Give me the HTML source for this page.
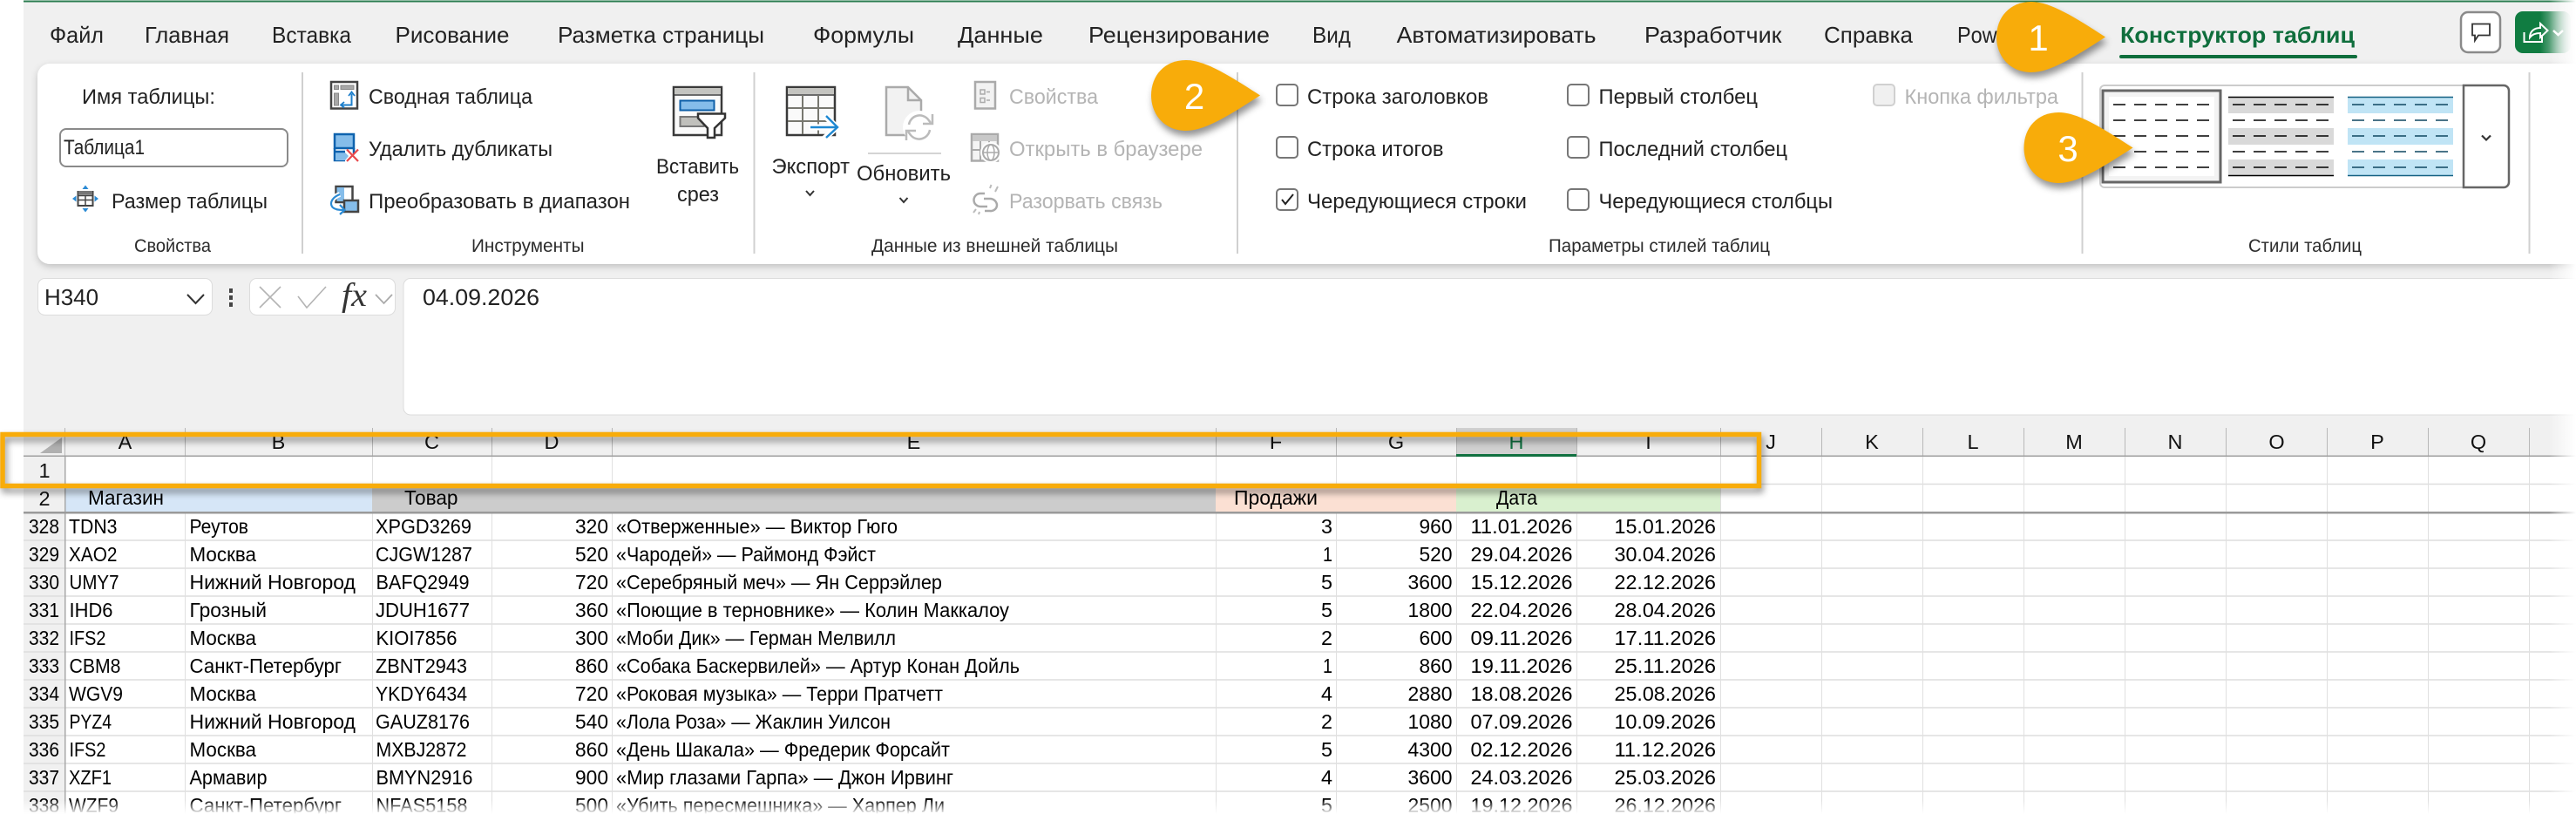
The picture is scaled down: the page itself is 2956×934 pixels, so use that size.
<!DOCTYPE html>
<html lang="ru"><head><meta charset="utf-8"><title>Excel</title>
<style>
html,body{margin:0;padding:0;background:#fff;width:2956px;height:934px;overflow:hidden}
svg{display:block}
text{font-family:"Liberation Sans","DejaVu Sans",sans-serif}
.tab{font-size:26px;fill:#222}
.rb{font-size:24px;fill:#222}
.lb{font-size:21.5px;fill:#2c2c2c}
.dis{font-size:24px;fill:#b4b4b4}
.c{font-size:23.5px;fill:#000}
.h{font-size:23.5px;fill:#111;text-anchor:middle}
.co{font-size:42px;fill:#fff;text-anchor:middle}
.call{fill:#F8AC0A;filter:drop-shadow(2px 6px 4px rgba(0,0,0,.42))}
</style></head><body>
<svg xmlns="http://www.w3.org/2000/svg" width="2956" height="934" viewBox="0 0 2956 934">
<defs>
<linearGradient id="fr" x1="0" x2="1" y1="0" y2="0"><stop offset="0" stop-color="#fff" stop-opacity="0"/><stop offset="1" stop-color="#fff"/></linearGradient>
<linearGradient id="fb" x1="0" x2="0" y1="0" y2="1"><stop offset="0" stop-color="#fff" stop-opacity="0"/><stop offset="1" stop-color="#fff"/></linearGradient>
<linearGradient id="sh" x1="0" x2="1" y1="0" y2="0"><stop offset="0" stop-color="#107C41"/><stop offset=".45" stop-color="#107C41"/><stop offset="1" stop-color="#107C41" stop-opacity=".08"/></linearGradient>
<filter id="ps" x="-5%" y="-10%" width="110%" height="125%"><feDropShadow dx="0" dy="3" stdDeviation="4" flood-color="#000" flood-opacity=".2"/></filter>
</defs>
<rect width="2956" height="934" fill="#fff"/>
<rect x="27" y="1" width="2929" height="933" fill="#f0f0f0"/>
<rect x="27" y="0.5" width="2929" height="2" fill="#2a7d4f"/>

<!-- tabs -->
<g class="tab">
<text class="tab" x="57" y="49" textLength="62" lengthAdjust="spacingAndGlyphs">Файл</text>
<text class="tab" x="166" y="49" textLength="97" lengthAdjust="spacingAndGlyphs">Главная</text>
<text class="tab" x="312" y="49" textLength="91" lengthAdjust="spacingAndGlyphs">Вставка</text>
<text class="tab" x="453.5" y="49" textLength="131" lengthAdjust="spacingAndGlyphs">Рисование</text>
<text class="tab" x="640" y="49" textLength="237" lengthAdjust="spacingAndGlyphs">Разметка страницы</text>
<text class="tab" x="933" y="49" textLength="116" lengthAdjust="spacingAndGlyphs">Формулы</text>
<text class="tab" x="1099" y="49" textLength="98" lengthAdjust="spacingAndGlyphs">Данные</text>
<text class="tab" x="1249" y="49" textLength="208" lengthAdjust="spacingAndGlyphs">Рецензирование</text>
<text class="tab" x="1506" y="49" textLength="44" lengthAdjust="spacingAndGlyphs">Вид</text>
<text class="tab" x="1602.6" y="49" textLength="229" lengthAdjust="spacingAndGlyphs">Автоматизировать</text>
<text class="tab" x="1887" y="49" textLength="157.5" lengthAdjust="spacingAndGlyphs">Разработчик</text>
<text class="tab" x="2093" y="49" textLength="102" lengthAdjust="spacingAndGlyphs">Справка</text>
<text class="tab" x="2246" y="49" textLength="125" lengthAdjust="spacingAndGlyphs">Power Pivot</text>
<text x="2433" y="49" font-size="26" font-weight="700" fill="#0f6e3c" textLength="269" lengthAdjust="spacingAndGlyphs">Конструктор таблиц</text>
</g>
<rect x="2432" y="63" width="273" height="4" rx="2" fill="#0f6e3c"/>

<!-- top right buttons -->
<rect x="2824" y="14" width="45" height="46" rx="8" fill="#fff" stroke="#8a8a8a" stroke-width="2.5"/>
<path d="M2837 27.5h20v13h-13l-4 6v-6h-3z" fill="#fff" stroke="#333" stroke-width="1.8"/>
<rect x="2886" y="13" width="64" height="48" rx="9" fill="url(#sh)"/>
<path d="M2896.5 37v11h20.5v-8M2903 43c0-7 5-11 12-11v-5l8.500 8-8.500 8v-5c-5 0-9 1-12 5z" fill="none" stroke="#fff" stroke-width="2"/>
<path d="M2930 35l5.500 5 5.500-5" fill="none" stroke="#fff" stroke-width="2.500"/>

<!-- ribbon panel -->
<rect x="43" y="73" width="2960" height="230" rx="14" fill="#fff" filter="url(#ps)"/>

<!-- separators -->
<g fill="#d0d0d0">
<rect x="346" y="83" width="2" height="208"/><rect x="864.500" y="83" width="2" height="208"/><rect x="1419" y="83" width="2" height="208"/><rect x="2388.500" y="83" width="2" height="208"/><rect x="2901.500" y="83" width="2" height="208"/>
</g>

<!-- group: properties -->
<text class="rb" x="94" y="119" textLength="153" lengthAdjust="spacingAndGlyphs">Имя таблицы:</text>
<rect x="69" y="148" width="261" height="43" rx="7" fill="#fff" stroke="#8a8a8a" stroke-width="2"/>
<text class="rb" x="73" y="177" textLength="93" lengthAdjust="spacingAndGlyphs">Таблица1</text>
<rect x="89.500" y="220" width="17" height="16" fill="#fff" stroke="#444" stroke-width="2"/>
<path d="M90 224.500h16M90 229.500h16M98 225v11" stroke="#444" stroke-width="1.500"/>
<rect x="90" y="219" width="16" height="4.500" fill="#777"/>
<path d="M98 212.500l3.500 4.500h-7zM98 243.500l3.500-4.500h-7zM83 228l4.500-3.500v7zM113 228l-4.500-3.500v7z" fill="#2a8ad4"/>
<text class="rb" x="128" y="239" textLength="179" lengthAdjust="spacingAndGlyphs">Размер таблицы</text>
<text class="lb" x="154" y="289" textLength="88" lengthAdjust="spacingAndGlyphs">Свойства</text>

<!-- group: tools -->
<rect x="380" y="94" width="30" height="30.500" fill="#fff" stroke="#444" stroke-width="2.500"/>
<path d="M383.500 98h5v4.500h-5zM391 98h15v4.500h-15zM383.500 107h5v14h-5z" fill="#a8a8a8" stroke="#888" stroke-width="1"/>
<path d="M392 120.500h11.500v-13" fill="none" stroke="#1e7fcb" stroke-width="2"/>
<path d="M400 110l3.500-4.500 3.500 4.500M395 117l-4 3.500 4 3" fill="none" stroke="#1e7fcb" stroke-width="1.800"/>
<text class="rb" x="423" y="119" textLength="188" lengthAdjust="spacingAndGlyphs">Сводная таблица</text>

<path d="M384 154h22v16h-22z" fill="#85bdea" stroke="#0d62ae" stroke-width="2.500"/>
<path d="M384 170v14h12M406 170v6" fill="none" stroke="#0d62ae" stroke-width="2.500"/>
<path d="M385 175h11l4 4-4 5h-11z" fill="#85bdea"/>
<path d="M384 174h12" stroke="#0d62ae" stroke-width="2.500"/>
<path d="M398 171.500l13 13.500M411 171.500l-13 13.500" stroke="#e8484c" stroke-width="2.200"/>
<text class="rb" x="423" y="179" textLength="211" lengthAdjust="spacingAndGlyphs">Удалить дубликаты</text>

<rect x="385.500" y="214" width="19" height="18" fill="#fff" stroke="#444" stroke-width="2.500"/>
<rect x="386.500" y="215" width="8.500" height="16" fill="#85bdea"/>
<rect x="395" y="230" width="16" height="13" fill="#85bdea" stroke="#444" stroke-width="2.500"/>
<path d="M390 223c-8 3-12 9-9 14 2 3 7 4 13 4" fill="none" stroke="#fff" stroke-width="6"/>
<path d="M390 223c-8 3-12 9-9 14 2 3 7 4 13 4" fill="none" stroke="#2a8ad4" stroke-width="2.200"/>
<path d="M390 235l5.500 6-5.500 5" fill="none" stroke="#2a8ad4" stroke-width="2.200"/>
<text class="rb" x="423" y="239" textLength="300" lengthAdjust="spacingAndGlyphs">Преобразовать в диапазон</text>

<rect x="773" y="100" width="55" height="55" fill="#fafafa" stroke="#3a3a3a" stroke-width="2.500"/>
<rect x="774" y="101" width="53" height="7" fill="#c4c4c0"/>
<path d="M773 109h55" stroke="#3a3a3a" stroke-width="1.500"/>
<rect x="780.500" y="115.500" width="39" height="11" fill="#85bdea" stroke="#0d5fa8" stroke-width="2"/>
<rect x="780.500" y="134" width="27" height="11" fill="#c0c0bc" stroke="#777" stroke-width="2"/>
<path d="M801 130.500h31v5l-12 11.500v11h-8v-11l-11-11.500z" fill="#fff" stroke="#333" stroke-width="2.500"/>
<text class="rb" x="753" y="199" textLength="95" lengthAdjust="spacingAndGlyphs">Вставить</text>
<text class="rb" x="777" y="231" textLength="48" lengthAdjust="spacingAndGlyphs">срез</text>
<text class="lb" x="541" y="289" textLength="129.500" lengthAdjust="spacingAndGlyphs">Инструменты</text>

<!-- group: external -->
<rect x="903" y="100" width="55" height="55" fill="#fafafa" stroke="#3a3a3a" stroke-width="2.500"/>
<rect x="904" y="101" width="53" height="7" fill="#c4c4c0"/>
<path d="M903 109h55" stroke="#3a3a3a" stroke-width="1.500"/>
<path d="M921 109v45M939 109v45M904 124h53M904 139h53" stroke="#77776f" stroke-width="2"/>
<path d="M928 146h33M946 132l14 14-14 13" fill="none" stroke="#fff" stroke-width="7"/>
<path d="M930 146h30M948 133l13 13-13 12" fill="none" stroke="#1e88d2" stroke-width="2.400"/>
<text class="rb" x="885.500" y="199" textLength="89.500" lengthAdjust="spacingAndGlyphs">Экспорт</text>
<path d="M925 219l4.500 5 4.500-5" fill="none" stroke="#333" stroke-width="2"/>

<path d="M1017 100h25l15 15v40h-40z" fill="#f2f2f2" stroke="#aaa" stroke-width="2.500"/>
<path d="M1042 100v15h15" fill="none" stroke="#aaa" stroke-width="2.500"/>
<circle cx="1055" cy="146" r="19" fill="#fff"/>
<path d="M1043 143a12.500 12.500 0 0 1 22-6l3 4M1067 149a12.500 12.500 0 0 1-22 6l-3-4" fill="none" stroke="#bbb" stroke-width="2.500"/>
<path d="M1070 131v11h-11M1040 161v-11h11" fill="none" stroke="#bbb" stroke-width="2.500"/>
<rect x="996" y="175" width="84" height="2" fill="#d4d4d4"/>
<text class="rb" x="983" y="207" textLength="108" lengthAdjust="spacingAndGlyphs">Обновить</text>
<path d="M1032.500 227l4.500 5 4.500-5" fill="none" stroke="#333" stroke-width="2"/>

<rect x="1119" y="94" width="23" height="30.500" fill="#f2f2f2" stroke="#aaa" stroke-width="2.500"/>
<path d="M1125 103h5v5h-5zM1125 112.500h5v5h-5z" fill="none" stroke="#aaa" stroke-width="1.500"/>
<path d="M1132 105.500h4M1132 115h4" stroke="#aaa" stroke-width="1.500"/>
<text class="dis" x="1158" y="119" textLength="102" lengthAdjust="spacingAndGlyphs">Свойства</text>
<rect x="1115" y="154" width="30" height="30.500" fill="#f4f4f4" stroke="#aaa" stroke-width="2.500"/>
<rect x="1116" y="155" width="28" height="7" fill="#c8c8c8"/>
<path d="M1125 162v22M1135 162v10M1116 172h20" stroke="#aaa" stroke-width="2"/>
<circle cx="1137" cy="175" r="12" fill="#fff"/>
<circle cx="1137" cy="175" r="9" fill="none" stroke="#aaa" stroke-width="2"/>
<ellipse cx="1137" cy="175" rx="4" ry="9" fill="none" stroke="#aaa" stroke-width="1.500"/>
<path d="M1128 175h18" stroke="#aaa" stroke-width="1.500"/>
<text class="dis" x="1158" y="179" textLength="222" lengthAdjust="spacingAndGlyphs">Открыть в браузере</text>
<path d="M1130 222h-5a7.500 7.500 0 0 0 0 15h8M1129 228h7a8 8 0 0 1 8 7 7 7 0 0 1-8 7h-6" fill="none" stroke="#aaa" stroke-width="2.500"/>
<path d="M1136 216l1.500-4M1142 220l3-6M1120 240l-3 4M1124 243l-1 3" stroke="#bbb" stroke-width="2"/>
<text class="dis" x="1158" y="239" textLength="176" lengthAdjust="spacingAndGlyphs">Разорвать связь</text>
<text class="lb" x="1000" y="289" textLength="283" lengthAdjust="spacingAndGlyphs">Данные из внешней таблицы</text>

<!-- group: style options -->
<g fill="#fff" stroke="#777" stroke-width="2">
<rect x="1465" y="97" width="24" height="24" rx="4"/><rect x="1465" y="157" width="24" height="24" rx="4"/><rect x="1465" y="217" width="24" height="24" rx="4"/>
<rect x="1799" y="97" width="24" height="24" rx="4"/><rect x="1799" y="157" width="24" height="24" rx="4"/><rect x="1799" y="217" width="24" height="24" rx="4"/>
</g>
<path d="M1471 229l4 5 9-11" fill="none" stroke="#222" stroke-width="2"/>
<rect x="2150" y="97" width="24" height="24" rx="4" fill="#f0f0f0" stroke="#d0d0d0" stroke-width="2"/>
<text class="rb" x="1500" y="119" textLength="208" lengthAdjust="spacingAndGlyphs">Строка заголовков</text>
<text class="rb" x="1500" y="179" textLength="156.500" lengthAdjust="spacingAndGlyphs">Строка итогов</text>
<text class="rb" x="1500" y="239" textLength="252" lengthAdjust="spacingAndGlyphs">Чередующиеся строки</text>
<text class="rb" x="1834.500" y="119" textLength="182.500" lengthAdjust="spacingAndGlyphs">Первый столбец</text>
<text class="rb" x="1834.500" y="179" textLength="216.500" lengthAdjust="spacingAndGlyphs">Последний столбец</text>
<text class="rb" x="1834.500" y="239" textLength="268.500" lengthAdjust="spacingAndGlyphs">Чередующиеся столбцы</text>
<text class="dis" x="2185.500" y="119" textLength="176.500" lengthAdjust="spacingAndGlyphs">Кнопка фильтра</text>
<text class="lb" x="1777" y="289" textLength="254" lengthAdjust="spacingAndGlyphs">Параметры стилей таблиц</text>

<!-- gallery -->
<path d="M2826 98h-411a5 5 0 0 0-5 5v107a5 5 0 0 0 5 5h411" fill="#fff" stroke="#ccc" stroke-width="2"/>
<path d="M2827 98h46a6 6 0 0 1 6 6v105a6 6 0 0 1-6 6h-46z" fill="#fff" stroke="#666" stroke-width="2.500"/>
<rect x="2413" y="104" width="135" height="105" fill="#f3f3f3" stroke="#666" stroke-width="3"/>
<rect x="2420" y="111" width="121" height="91" fill="#fff"/>
<g fill="#d9d9d9"><rect x="2557" y="112" width="121" height="18"/><rect x="2557" y="147" width="121" height="19"/><rect x="2557" y="183" width="121" height="18"/></g>
<g fill="#c0e4f5"><rect x="2694" y="112" width="121" height="18"/><rect x="2694" y="147" width="121" height="19"/><rect x="2694" y="183" width="121" height="18"/></g>
<path d="M2557 111.500h121M2557 201.500h121" stroke="#000" stroke-width="1.500"/>
<path d="M2694 111.500h121M2694 201.500h121" stroke="#156082" stroke-width="1.500"/>
<path stroke="#000" stroke-width="1.500" stroke-dasharray="14 10" d="M2425 120h110M2425 138h110M2425 156h110M2425 174h110M2425 192h110"/>
<path stroke="#000" stroke-width="1.500" stroke-dasharray="14 10" d="M2562 120h110M2562 138h110M2562 156h110M2562 174h110M2562 192h110"/>
<path stroke="#0f4761" stroke-width="1.500" stroke-dasharray="14 10" d="M2699 120h110M2699 138h110M2699 156h110M2699 174h110M2699 192h110"/>
<path d="M2848 155.500l5 5 5-5" fill="none" stroke="#333" stroke-width="2.200"/>
<text class="lb" x="2580" y="289" textLength="130" lengthAdjust="spacingAndGlyphs">Стили таблиц</text>

<!-- formula bar -->
<rect x="43.500" y="319.500" width="200" height="42" rx="8" fill="#fff" stroke="#dcdcdc" stroke-width="1"/>
<text x="51" y="350" font-size="26" fill="#222" textLength="62" lengthAdjust="spacingAndGlyphs">H340</text>
<path d="M215 338l9.500 10 9.500-10" fill="none" stroke="#333" stroke-width="2"/>
<g fill="#444"><rect x="263" y="331" width="4" height="5"/><rect x="263" y="339" width="4" height="5"/><rect x="263" y="347" width="4" height="5"/></g>
<rect x="286.500" y="319.500" width="167" height="42" rx="8" fill="#fff" stroke="#dcdcdc" stroke-width="1"/>
<path d="M298 329l24 24M322 329l-24 24M342 340l10 13 22-24" fill="none" stroke="#b4b4b4" stroke-width="1.600"/>
<text x="392" y="351" font-style="italic" font-size="38" fill="#333" textLength="29" lengthAdjust="spacingAndGlyphs" style="font-family:'Liberation Serif',serif">fx</text>
<path d="M431 338l9.500 10 9.500-10" fill="none" stroke="#aaa" stroke-width="1.800"/>
<path d="M2960 319.500H471a8 8 0 0 0-8 8V468a8 8 0 0 0 8 8H2960z" fill="#fff" stroke="#dcdcdc" stroke-width="1"/>
<text x="485" y="350" font-size="26" fill="#222" textLength="134" lengthAdjust="spacingAndGlyphs">04.09.2026</text>

<!-- grid -->
<rect x="27" y="491" width="2929" height="32" fill="#f0f0f0"/>
<rect x="75" y="524" width="2881" height="410" fill="#fff"/>
<rect x="1671" y="491" width="138" height="30" fill="#d0d0d0"/>
<path d="M71 502v18H46z" fill="#b0b0b0"/>
<!-- header fills row 2 -->
<rect x="75" y="556" width="352" height="31" fill="#d6e6f7"/>
<rect x="427" y="556" width="968" height="31" fill="#cccccc"/>
<rect x="1395" y="556" width="276" height="31" fill="#fbe0d3"/>
<rect x="1671" y="556" width="303.500" height="31" fill="#d9f0cf"/>
<!-- horizontal grid -->
<g stroke="#dedede" stroke-width="1.500">
<path d="M75 555.500H2956"/>
<path d="M27 620H2956M27 652H2956M27 684H2956M27 716H2956M27 748H2956M27 780H2956M27 812H2956M27 844H2956M27 876H2956M27 908H2956"/>
</g>
<!-- vertical grid -->
<g stroke="#e0e0e0" stroke-width="1">
<path d="M212.500 524V556M212.500 588V934M427.500 524V556M427.500 588V934M564.500 524V556M564.500 588V934M702.500 524V556M702.500 588V934M1395.500 524V556M1395.500 588V934M1533.500 524V556M1533.500 588V934M1671.500 524V556M1671.500 588V934M1809.500 524V556M1809.500 588V934M1974.500 524V934M2090.500 524V934M2206.500 524V934M2322.500 524V934M2438.500 524V934M2554.500 524V934M2670.500 524V934M2786.500 524V934M2902.500 524V934"/>
</g>
<!-- header separators -->
<g stroke="#b8b8b8" stroke-width="1">
<path d="M74.500 491V523M212.500 491V523M427.500 491V523M564.500 491V523M702.500 491V523M1395.500 491V523M1533.500 491V523M1671.500 491V523M1809.500 491V523M1974.500 491V523M2090.500 491V523M2206.500 491V523M2322.500 491V523M2438.500 491V523M2554.500 491V523M2670.500 491V523M2786.500 491V523M2902.500 491V523"/>
</g>
<rect x="74" y="523" width="1.500" height="411" fill="#a8a8a8"/>
<rect x="27" y="522.500" width="2929" height="1.500" fill="#a0a0a0"/>
<rect x="1671" y="521" width="138" height="3" fill="#107040"/>
<rect x="27" y="587" width="2929" height="2.500" fill="#9a9a9a"/>

<!-- column letters -->
<text class="h" x="143.500" y="515">A</text><text class="h" x="319.500" y="515">B</text><text class="h" x="495.500" y="515">C</text><text class="h" x="633" y="515">D</text><text class="h" x="1048.500" y="515">E</text><text class="h" x="1464" y="515">F</text><text class="h" x="1602" y="515">G</text><text class="h" x="1740" y="515" style="fill:#107040">H</text><text class="h" x="1891.500" y="515">I</text><text class="h" x="2032" y="515">J</text><text class="h" x="2148" y="515">K</text><text class="h" x="2264" y="515">L</text><text class="h" x="2380" y="515">M</text><text class="h" x="2496" y="515">N</text><text class="h" x="2612.500" y="515">O</text><text class="h" x="2728" y="515">P</text><text class="h" x="2844" y="515">Q</text>
<text class="h" x="51" y="548">1</text><text class="h" x="51" y="580">2</text>

<text class="c" x="101" y="579" textLength="87" lengthAdjust="spacingAndGlyphs">Магазин</text>
<text class="c" x="464" y="579" textLength="61.500" lengthAdjust="spacingAndGlyphs">Товар</text>
<text class="c" x="1416" y="579" textLength="96" lengthAdjust="spacingAndGlyphs">Продажи</text>
<text class="c" x="1717" y="579" textLength="47" lengthAdjust="spacingAndGlyphs">Дата</text>

<!-- rows -->
<g>
<text class="c" x="33" y="612" textLength="35" lengthAdjust="spacingAndGlyphs">328</text><text class="c" x="79" y="612" textLength="55.500" lengthAdjust="spacingAndGlyphs">TDN3</text><text class="c" x="217.500" y="612" textLength="67.500" lengthAdjust="spacingAndGlyphs">Реутов</text><text class="c" x="431" y="612" textLength="110" lengthAdjust="spacingAndGlyphs">XPGD3269</text><text class="c" x="660" y="612" textLength="38" lengthAdjust="spacingAndGlyphs">320</text><text class="c" x="707" y="612" textLength="323" lengthAdjust="spacingAndGlyphs">«Отверженные» — Виктор Гюго</text><text class="c" x="1516" y="612" textLength="13" lengthAdjust="spacingAndGlyphs">3</text><text class="c" x="1628.500" y="612" textLength="38" lengthAdjust="spacingAndGlyphs">960</text><text class="c" x="1687.500" y="612" textLength="117" lengthAdjust="spacingAndGlyphs">11.01.2026</text><text class="c" x="1852.500" y="612" textLength="116.500" lengthAdjust="spacingAndGlyphs">15.01.2026</text>
<text class="c" x="33" y="644" textLength="35" lengthAdjust="spacingAndGlyphs">329</text><text class="c" x="79" y="644" textLength="55.500" lengthAdjust="spacingAndGlyphs">XAO2</text><text class="c" x="217.500" y="644" textLength="76.500" lengthAdjust="spacingAndGlyphs">Москва</text><text class="c" x="431" y="644" textLength="111" lengthAdjust="spacingAndGlyphs">CJGW1287</text><text class="c" x="660" y="644" textLength="38" lengthAdjust="spacingAndGlyphs">520</text><text class="c" x="707" y="644" textLength="298" lengthAdjust="spacingAndGlyphs">«Чародей» — Раймонд Фэйст</text><text class="c" x="1518" y="644" textLength="11" lengthAdjust="spacingAndGlyphs">1</text><text class="c" x="1628.500" y="644" textLength="38" lengthAdjust="spacingAndGlyphs">520</text><text class="c" x="1687.500" y="644" textLength="117" lengthAdjust="spacingAndGlyphs">29.04.2026</text><text class="c" x="1852.500" y="644" textLength="116.500" lengthAdjust="spacingAndGlyphs">30.04.2026</text>
<text class="c" x="33" y="676" textLength="35" lengthAdjust="spacingAndGlyphs">330</text><text class="c" x="79.500" y="676" textLength="57" lengthAdjust="spacingAndGlyphs">UMY7</text><text class="c" x="217.500" y="676" textLength="190.500" lengthAdjust="spacingAndGlyphs">Нижний Новгород</text><text class="c" x="431.500" y="676" textLength="107" lengthAdjust="spacingAndGlyphs">BAFQ2949</text><text class="c" x="660" y="676" textLength="38" lengthAdjust="spacingAndGlyphs">720</text><text class="c" x="707" y="676" textLength="374" lengthAdjust="spacingAndGlyphs">«Серебряный меч» — Ян Серрэйлер</text><text class="c" x="1516" y="676" textLength="13" lengthAdjust="spacingAndGlyphs">5</text><text class="c" x="1615.500" y="676" textLength="51" lengthAdjust="spacingAndGlyphs">3600</text><text class="c" x="1687.500" y="676" textLength="117" lengthAdjust="spacingAndGlyphs">15.12.2026</text><text class="c" x="1852.500" y="676" textLength="116.500" lengthAdjust="spacingAndGlyphs">22.12.2026</text>
<text class="c" x="33" y="708" textLength="35" lengthAdjust="spacingAndGlyphs">331</text><text class="c" x="79.500" y="708" textLength="50" lengthAdjust="spacingAndGlyphs">IHD6</text><text class="c" x="217.500" y="708" textLength="88.500" lengthAdjust="spacingAndGlyphs">Грозный</text><text class="c" x="431" y="708" textLength="108" lengthAdjust="spacingAndGlyphs">JDUH1677</text><text class="c" x="660" y="708" textLength="38" lengthAdjust="spacingAndGlyphs">360</text><text class="c" x="707" y="708" textLength="451" lengthAdjust="spacingAndGlyphs">«Поющие в терновнике» — Колин Маккалоу</text><text class="c" x="1516" y="708" textLength="13" lengthAdjust="spacingAndGlyphs">5</text><text class="c" x="1615.500" y="708" textLength="51" lengthAdjust="spacingAndGlyphs">1800</text><text class="c" x="1687.500" y="708" textLength="117" lengthAdjust="spacingAndGlyphs">22.04.2026</text><text class="c" x="1852.500" y="708" textLength="116.500" lengthAdjust="spacingAndGlyphs">28.04.2026</text>
<text class="c" x="33" y="740" textLength="35" lengthAdjust="spacingAndGlyphs">332</text><text class="c" x="79.500" y="740" textLength="42" lengthAdjust="spacingAndGlyphs">IFS2</text><text class="c" x="217.500" y="740" textLength="76.500" lengthAdjust="spacingAndGlyphs">Москва</text><text class="c" x="431.500" y="740" textLength="93" lengthAdjust="spacingAndGlyphs">KIOI7856</text><text class="c" x="660" y="740" textLength="38" lengthAdjust="spacingAndGlyphs">300</text><text class="c" x="707" y="740" textLength="321" lengthAdjust="spacingAndGlyphs">«Моби Дик» — Герман Мелвилл</text><text class="c" x="1516" y="740" textLength="13" lengthAdjust="spacingAndGlyphs">2</text><text class="c" x="1628.500" y="740" textLength="38" lengthAdjust="spacingAndGlyphs">600</text><text class="c" x="1687.500" y="740" textLength="117" lengthAdjust="spacingAndGlyphs">09.11.2026</text><text class="c" x="1852.500" y="740" textLength="116.500" lengthAdjust="spacingAndGlyphs">17.11.2026</text>
<text class="c" x="33" y="772" textLength="35" lengthAdjust="spacingAndGlyphs">333</text><text class="c" x="79.500" y="772" textLength="59" lengthAdjust="spacingAndGlyphs">CBM8</text><text class="c" x="217.500" y="772" textLength="174.500" lengthAdjust="spacingAndGlyphs">Санкт-Петербург</text><text class="c" x="431" y="772" textLength="105" lengthAdjust="spacingAndGlyphs">ZBNT2943</text><text class="c" x="660" y="772" textLength="38" lengthAdjust="spacingAndGlyphs">860</text><text class="c" x="707" y="772" textLength="463" lengthAdjust="spacingAndGlyphs">«Собака Баскервилей» — Артур Конан Дойль</text><text class="c" x="1518" y="772" textLength="11" lengthAdjust="spacingAndGlyphs">1</text><text class="c" x="1628.500" y="772" textLength="38" lengthAdjust="spacingAndGlyphs">860</text><text class="c" x="1687.500" y="772" textLength="117" lengthAdjust="spacingAndGlyphs">19.11.2026</text><text class="c" x="1852.500" y="772" textLength="116.500" lengthAdjust="spacingAndGlyphs">25.11.2026</text>
<text class="c" x="33" y="804" textLength="35" lengthAdjust="spacingAndGlyphs">334</text><text class="c" x="79" y="804" textLength="62" lengthAdjust="spacingAndGlyphs">WGV9</text><text class="c" x="217.500" y="804" textLength="76.500" lengthAdjust="spacingAndGlyphs">Москва</text><text class="c" x="431" y="804" textLength="105" lengthAdjust="spacingAndGlyphs">YKDY6434</text><text class="c" x="660" y="804" textLength="38" lengthAdjust="spacingAndGlyphs">720</text><text class="c" x="707" y="804" textLength="375" lengthAdjust="spacingAndGlyphs">«Роковая музыка» — Терри Пратчетт</text><text class="c" x="1516" y="804" textLength="13" lengthAdjust="spacingAndGlyphs">4</text><text class="c" x="1615.500" y="804" textLength="51" lengthAdjust="spacingAndGlyphs">2880</text><text class="c" x="1687.500" y="804" textLength="117" lengthAdjust="spacingAndGlyphs">18.08.2026</text><text class="c" x="1852.500" y="804" textLength="116.500" lengthAdjust="spacingAndGlyphs">25.08.2026</text>
<text class="c" x="33" y="836" textLength="35" lengthAdjust="spacingAndGlyphs">335</text><text class="c" x="79.500" y="836" textLength="48.500" lengthAdjust="spacingAndGlyphs">PYZ4</text><text class="c" x="217.500" y="836" textLength="190.500" lengthAdjust="spacingAndGlyphs">Нижний Новгород</text><text class="c" x="431" y="836" textLength="108" lengthAdjust="spacingAndGlyphs">GAUZ8176</text><text class="c" x="660" y="836" textLength="38" lengthAdjust="spacingAndGlyphs">540</text><text class="c" x="707" y="836" textLength="315" lengthAdjust="spacingAndGlyphs">«Лола Роза» — Жаклин Уилсон</text><text class="c" x="1516" y="836" textLength="13" lengthAdjust="spacingAndGlyphs">2</text><text class="c" x="1615.500" y="836" textLength="51" lengthAdjust="spacingAndGlyphs">1080</text><text class="c" x="1687.500" y="836" textLength="117" lengthAdjust="spacingAndGlyphs">07.09.2026</text><text class="c" x="1852.500" y="836" textLength="116.500" lengthAdjust="spacingAndGlyphs">10.09.2026</text>
<text class="c" x="33" y="868" textLength="35" lengthAdjust="spacingAndGlyphs">336</text><text class="c" x="79.500" y="868" textLength="42" lengthAdjust="spacingAndGlyphs">IFS2</text><text class="c" x="217.500" y="868" textLength="76.500" lengthAdjust="spacingAndGlyphs">Москва</text><text class="c" x="431.500" y="868" textLength="104" lengthAdjust="spacingAndGlyphs">MXBJ2872</text><text class="c" x="660" y="868" textLength="38" lengthAdjust="spacingAndGlyphs">860</text><text class="c" x="707" y="868" textLength="383" lengthAdjust="spacingAndGlyphs">«День Шакала» — Фредерик Форсайт</text><text class="c" x="1516" y="868" textLength="13" lengthAdjust="spacingAndGlyphs">5</text><text class="c" x="1615.500" y="868" textLength="51" lengthAdjust="spacingAndGlyphs">4300</text><text class="c" x="1687.500" y="868" textLength="117" lengthAdjust="spacingAndGlyphs">02.12.2026</text><text class="c" x="1852.500" y="868" textLength="116.500" lengthAdjust="spacingAndGlyphs">11.12.2026</text>
<text class="c" x="33" y="900" textLength="35" lengthAdjust="spacingAndGlyphs">337</text><text class="c" x="79" y="900" textLength="49" lengthAdjust="spacingAndGlyphs">XZF1</text><text class="c" x="217.500" y="900" textLength="89" lengthAdjust="spacingAndGlyphs">Армавир</text><text class="c" x="431.500" y="900" textLength="111" lengthAdjust="spacingAndGlyphs">BMYN2916</text><text class="c" x="660" y="900" textLength="38" lengthAdjust="spacingAndGlyphs">900</text><text class="c" x="707" y="900" textLength="387" lengthAdjust="spacingAndGlyphs">«Мир глазами Гарпа» — Джон Ирвинг</text><text class="c" x="1516" y="900" textLength="13" lengthAdjust="spacingAndGlyphs">4</text><text class="c" x="1615.500" y="900" textLength="51" lengthAdjust="spacingAndGlyphs">3600</text><text class="c" x="1687.500" y="900" textLength="117" lengthAdjust="spacingAndGlyphs">24.03.2026</text><text class="c" x="1852.500" y="900" textLength="116.500" lengthAdjust="spacingAndGlyphs">25.03.2026</text>
<text class="c" x="33" y="932" textLength="35" lengthAdjust="spacingAndGlyphs">338</text><text class="c" x="79" y="932" textLength="57" lengthAdjust="spacingAndGlyphs">WZF9</text><text class="c" x="217.500" y="932" textLength="174.500" lengthAdjust="spacingAndGlyphs">Санкт-Петербург</text><text class="c" x="431.500" y="932" textLength="105" lengthAdjust="spacingAndGlyphs">NFAS5158</text><text class="c" x="660" y="932" textLength="38" lengthAdjust="spacingAndGlyphs">500</text><text class="c" x="707" y="932" textLength="377" lengthAdjust="spacingAndGlyphs">«Убить пересмешника» — Харпер Ли</text><text class="c" x="1516" y="932" textLength="13" lengthAdjust="spacingAndGlyphs">5</text><text class="c" x="1615.500" y="932" textLength="51" lengthAdjust="spacingAndGlyphs">2500</text><text class="c" x="1687.500" y="932" textLength="117" lengthAdjust="spacingAndGlyphs">19.12.2026</text><text class="c" x="1852.500" y="932" textLength="116.500" lengthAdjust="spacingAndGlyphs">26.12.2026</text>
</g>

<!-- fades -->
<rect x="0" y="918" width="2956" height="16" fill="url(#fb)"/>
<rect x="2925" y="0" width="31" height="934" fill="url(#fr)"/>

<!-- orange highlight -->
<rect x="3" y="498.500" width="2015.500" height="59" fill="none" stroke="#F8AC0A" stroke-width="5.500" style="filter:drop-shadow(2px 5px 4px rgba(0,0,0,.45))"/>

<!-- callouts -->
<path class="call" transform="translate(2291,2)" d="M40 0C62 0 90 18 125 40.500C90 63 62 81 40 81C15 81 0 62 0 40.500C0 18 15 0 40 0Z"/>
<text class="co" x="2339" y="58">1</text>
<path class="call" transform="translate(1321,69)" d="M40 0C62 0 90 18 125 40.500C90 63 62 81 40 81C15 81 0 62 0 40.500C0 18 15 0 40 0Z"/>
<text class="co" x="1370.500" y="125">2</text>
<path class="call" transform="translate(2322.500,129)" d="M40 0C62 0 90 18 125 40.500C90 63 62 81 40 81C15 81 0 62 0 40.500C0 18 15 0 40 0Z"/>
<text class="co" x="2373" y="185">3</text>
</svg>
</body></html>
